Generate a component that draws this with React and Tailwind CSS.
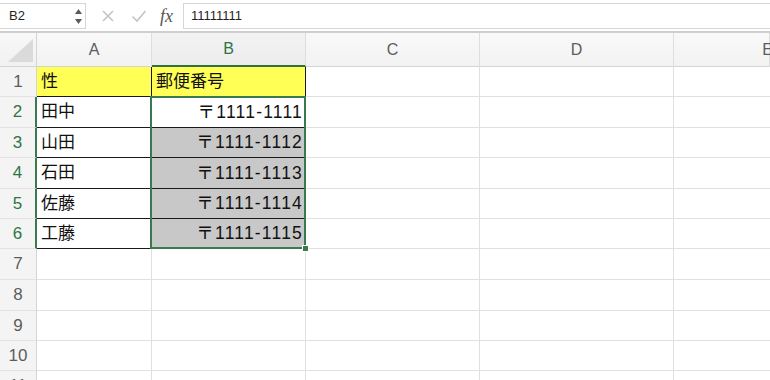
import React from "react";

const FONT = { fontFamily: '"Liberation Sans", "Noto Sans CJK JP", sans-serif' };

const rowHeights = ["h-[30px]", "h-[31px]", "h-[30px]", "h-[31px]", "h-[30px]", "h-[30px]", "h-[31px]", "h-[31px]", "h-[30px]", "h-[30px]", "h-[30px]"];

const dataA = ["性", "田中", "山田", "石田", "佐藤", "工藤"];
const dataB = ["郵便番号", "〒1111-1111", "〒1111-1112", "〒1111-1113", "〒1111-1114", "〒1111-1115"];

function TopBar() {
  return (
    <div className="h-[33px] bg-white border-b-2 border-[#cfcfcf] flex items-start relative">
      <div className="mt-[3px] h-[26px] w-[86px] border border-l-0 border-[#d6d6d6] bg-white flex items-center pl-[9px] text-[13px] text-[#1f1f1f] relative">
        B2
        <svg className="absolute right-[2px] top-[4px]" width="9" height="17" viewBox="0 0 9 17">
          <path d="M4.5 1 L8 6 L1 6 Z" fill="#5a5a5a" />
          <path d="M4.5 16 L8 11 L1 11 Z" fill="#5a5a5a" />
        </svg>
      </div>
      <div className="h-[31px] flex items-center">
        <svg className="ml-[15px]" width="14" height="14" viewBox="0 0 14 14">
          <path d="M2 2 L12 12 M12 2 L2 12" stroke="#c4c4c4" strokeWidth="1.6" />
        </svg>
        <svg className="ml-[16px]" width="16" height="14" viewBox="0 0 16 14">
          <path d="M1.5 7.5 L6 12 L14.5 2" stroke="#c4c4c4" strokeWidth="1.6" fill="none" />
        </svg>
        <span className="ml-[13px] text-[18px] italic text-[#555] leading-none" style={{ fontFamily: '"Liberation Serif", serif' }}>
          fx
        </span>
      </div>
      <div className="ml-[10px] mt-[3px] h-[26px] flex-1 border border-r-0 border-[#d6d6d6] flex items-center pl-[7px] text-[13px] text-[#1f1f1f]">
        11111111
      </div>
    </div>
  );
}

function HeaderRow() {
  const cols = [
    { w: "w-[115px]", l: "A" },
    { w: "w-[154px]", l: "B", sel: true },
    { w: "w-[174px]", l: "C" },
    { w: "w-[194px]", l: "D" },
    { w: "flex-1", l: "E" },
  ];
  return (
    <div className="flex h-[34px]">
      <div className="w-[37px] shrink-0 bg-gradient-to-b from-[#f8f8f8] to-[#f1f1f1] border-r border-b border-[#d4d4d4] relative">
        <svg className="absolute left-[7px] top-[5px]" width="27" height="25" viewBox="0 0 27 25">
          <path d="M26 1 L26 24 L1 24 Z" fill="#dadada" />
        </svg>
      </div>
      {cols.map((c) => (
        <div
          key={c.l}
          className={
            c.w +
            " shrink-0 flex items-center justify-center text-[16px] border-r border-[#dedede] " +
            (c.sel
              ? "bg-gradient-to-b from-[#f3f3f3] to-[#ececec] text-[#2e7446] border-b-2 border-b-[#2f6f44]"
              : "bg-gradient-to-b from-[#f9f9f9] to-[#f2f2f2] text-[#5c5c5c] border-b border-b-[#d4d4d4]") +
            (c.l === "E" ? " justify-end pr-0" : "")
          }
        >
          {c.l === "E" ? <span className="-mr-[4px]">E</span> : c.l}
        </div>
      ))}
    </div>
  );
}

function DataRow({ idx }) {
  const r = idx + 1;
  const inTable = idx < 6;
  const selRow = r >= 2 && r <= 6;
  const a = dataA[idx];
  const b = dataB[idx];
  const yellow = r === 1;
  const grayFill = r >= 3 && r <= 6;
  return (
    <div className={"flex " + rowHeights[idx]}>
      <div
        className={
          "w-[37px] shrink-0 bg-[#f4f4f4] flex items-center justify-center text-[17px] border-b border-[#e2e2e2] " +
          (selRow ? "text-[#2e7446] border-r-2 border-r-[#3b7a4e]" : "text-[#5c5c5c] border-r border-r-[#d4d4d4]")
        }
      >
        {r}
      </div>
      <div
        className={
          "w-[115px] shrink-0 flex items-center pl-[4px] text-[17px] text-[#111] border-r border-b " +
          (inTable ? "border-[#1a1a1a] " : "border-[#e0e0e0] ") +
          (yellow ? "bg-[#ffff55]" : "bg-white")
        }
      >
        {a}
      </div>
      <div
        className={
          "w-[154px] shrink-0 flex items-center text-[17.5px] text-[#111] border-r border-b " +
          (inTable ? "border-[#1a1a1a] " : "border-[#e0e0e0] ") +
          (yellow ? "bg-[#ffff55] pl-[4px] text-[17px] " : "justify-end pr-[2px] tracking-[1.2px] ") +
          (grayFill ? "bg-[#c8c8c8]" : yellow ? "" : "bg-white")
        }
      >
        {b}
      </div>
      <div className="w-[174px] shrink-0 bg-white border-r border-b border-[#e0e0e0]" />
      <div className="w-[194px] shrink-0 bg-white border-r border-b border-[#e0e0e0]" />
      <div className="flex-1 bg-white border-b border-[#e0e0e0]" />
    </div>
  );
}

export default function App() {
  return (
    <div className="w-[770px] h-[380px] overflow-hidden bg-white" style={FONT}>
      <TopBar />
      <HeaderRow />
      <div className="relative">
        {rowHeights.map((_, i) => (
          <DataRow key={i} idx={i} />
        ))}
        {/* selection border B2:B6 */}
        <div className="absolute left-[150px] top-[29px] w-[156px] h-[153px] border-2 border-[#3b7a4e] pointer-events-none" />
        {/* fill handle */}
        <div className="absolute left-[302px] top-[178px] w-[7px] h-[7px] bg-[#3b7a4e] border border-white" />
      </div>
    </div>
  );
}
